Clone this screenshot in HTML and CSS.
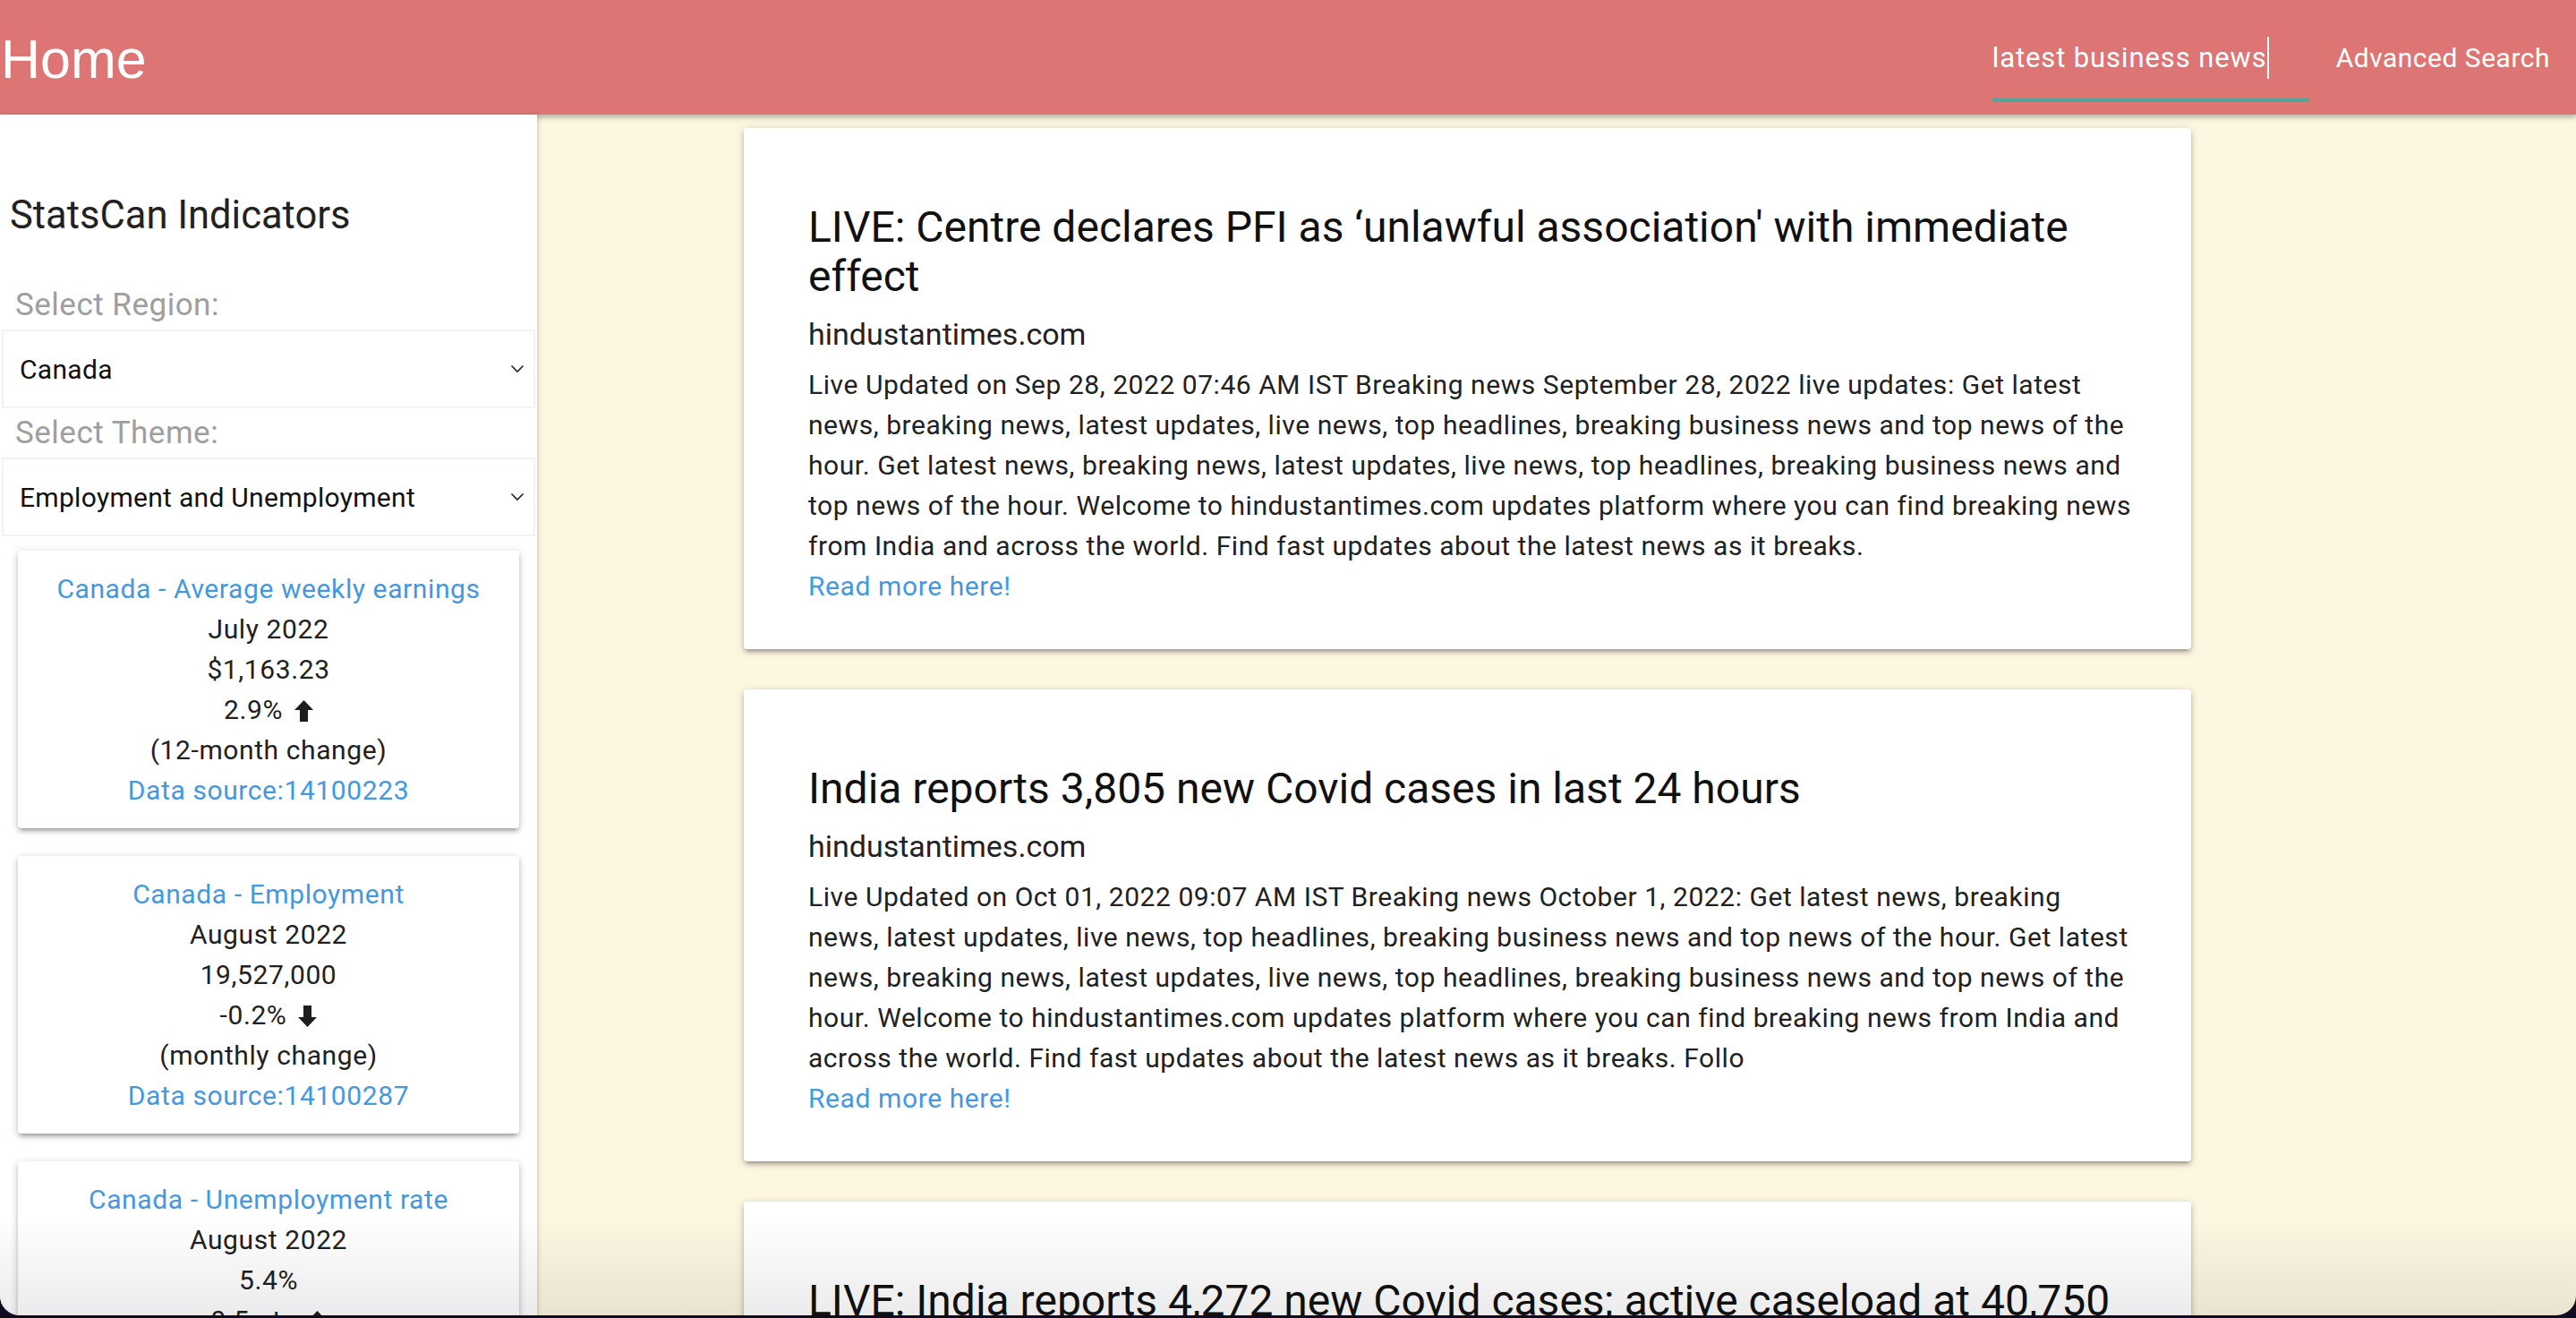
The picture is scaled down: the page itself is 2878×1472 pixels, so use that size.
FILE: index.html
```html
<!DOCTYPE html>
<html lang="en">
<head>
<meta charset="utf-8">
<title>Home</title>
<link rel="stylesheet" href="styles.css">
</head>
<body>
<div class="window">
  <header class="nav">
    <div class="brand">Home</div>
    <div class="search"><span class="search-text">latest business news</span><span class="caret"></span></div>
    <a class="nav-link" href="#">Advanced Search</a>
  </header>
  <div class="layout">
    <aside class="sidebar">
      <h5 class="side-title">StatsCan Indicators</h5>
      <div class="label">Select Region:</div>
      <div class="select"><span>Canada</span><svg class="chev" width="16" height="10" viewBox="0 0 16 10"><path d="M1.5 1.5 L8 8 L14.5 1.5" fill="none" stroke="#222" stroke-width="1.6"/></svg></div>
      <div class="label">Select Theme:</div>
      <div class="select"><span>Employment and Unemployment</span><svg class="chev" width="16" height="10" viewBox="0 0 16 10"><path d="M1.5 1.5 L8 8 L14.5 1.5" fill="none" stroke="#222" stroke-width="1.6"/></svg></div>
      <div class="stat-list">
        <div class="stat-card">
          <a class="link" href="#">Canada - Average weekly earnings</a>
          <div>July 2022</div>
          <div>$1,163.23</div>
          <div>2.9% <svg class="arrow" width="21" height="24" viewBox="0 0 21 24"><path d="M10.5 0 L21 11 H15 V24 H6 V11 H0 Z" fill="#1e1e1e"/></svg></div>
          <div>(12-month change)</div>
          <a class="link" href="#">Data source:14100223</a>
        </div>
        <div class="stat-card">
          <a class="link" href="#">Canada - Employment</a>
          <div>August 2022</div>
          <div>19,527,000</div>
          <div>-0.2% <svg class="arrow" width="21" height="24" viewBox="0 0 21 24"><path d="M10.5 24 L21 13 H15 V0 H6 V13 H0 Z" fill="#1e1e1e"/></svg></div>
          <div>(monthly change)</div>
          <a class="link" href="#">Data source:14100287</a>
        </div>
        <div class="stat-card">
          <a class="link" href="#">Canada - Unemployment rate</a>
          <div>August 2022</div>
          <div>5.4%</div>
          <div>0.5 pts <svg class="arrow" width="21" height="24" viewBox="0 0 21 24"><path d="M10.5 0 L21 11 H15 V24 H6 V11 H0 Z" fill="#1e1e1e"/></svg></div>
          <div>(monthly change)</div>
          <a class="link" href="#">Data source:14100287</a>
        </div>
      </div>
    </aside>
    <main class="main">
      <article class="news-card">
        <h5 class="news-title">LIVE: Centre declares PFI as ‘unlawful association' with immediate effect</h5>
        <h6 class="news-source">hindustantimes.com</h6>
        <p class="news-body">Live Updated on Sep 28, 2022 07:46 AM IST Breaking news September 28, 2022 live updates: Get latest<br>news, breaking news, latest updates, live news, top headlines, breaking business news and top news of the<br>hour. Get latest news, breaking news, latest updates, live news, top headlines, breaking business news and<br>top news of the hour. Welcome to hindustantimes.com updates platform where you can find breaking news<br>from India and across the world. Find fast updates about the latest news as it breaks.</p>
        <a class="link" href="#">Read more here!</a>
      </article>
      <article class="news-card">
        <h5 class="news-title">India reports 3,805 new Covid cases in last 24 hours</h5>
        <h6 class="news-source">hindustantimes.com</h6>
        <p class="news-body">Live Updated on Oct 01, 2022 09:07 AM IST Breaking news October 1, 2022: Get latest news, breaking<br>news, latest updates, live news, top headlines, breaking business news and top news of the hour. Get latest<br>news, breaking news, latest updates, live news, top headlines, breaking business news and top news of the<br>hour. Welcome to hindustantimes.com updates platform where you can find breaking news from India and<br>across the world. Find fast updates about the latest news as it breaks. Follo</p>
        <a class="link" href="#">Read more here!</a>
      </article>
      <article class="news-card">
        <h5 class="news-title">LIVE: India reports 4,272 new Covid cases; active caseload at 40,750</h5>
        <h6 class="news-source">hindustantimes.com</h6>
        <p class="news-body">Live Updated on Oct 02, 2022 08:10 AM IST Breaking news October 2, 2022: Get latest news, breaking<br>news, latest updates, live news, top headlines, breaking business news and top news of the hour.</p>
        <a class="link" href="#">Read more here!</a>
      </article>
    </main>
  </div>
  <div class="bottom-shade"></div>
</div>
</body>
</html>
```

FILE: styles.css
```css
html, body {
  margin: 0;
  padding: 0;
}
body {
  background: #0f0c22;
  font-family: Roboto, "Noto Sans", sans-serif;
  color: #212121;
  overflow: hidden;
}
.window {
  position: relative;
  height: 1469px;
  overflow: hidden;
  border-radius: 0 0 22px 22px;
  background: #fdf6e1;
  display: flex;
  flex-direction: column;
}
.nav {
  position: relative;
  z-index: 1;
  flex: 0 0 128px;
  height: 128px;
  background: #de7575;
  display: flex;
  align-items: flex-start;
  box-shadow: 0 4px 4px rgba(0,0,0,0.16), 0 2px 10px rgba(0,0,0,0.12);
  color: #fff;
}
.brand {
  flex: 1;
  font-family: "Liberation Sans", Arial, sans-serif;
  font-size: 61px;
  line-height: 72px;
  margin-top: 30px;
  padding-left: 1px;
}
.search {
  width: 354px;
  margin-top: 41px;
  padding-bottom: 22px;
  border-bottom: 4px solid #4fa698;
  font-size: 31px;
  letter-spacing: 0.9px;
  line-height: 45px;
  display: flex;
  align-items: center;
}
.caret {
  display: inline-block;
  width: 2px;
  height: 47px;
  background: #fff;
  margin-left: 0;
}
.nav-link {
  color: #fff;
  text-decoration: none;
  font-size: 30px;
  letter-spacing: 0.5px;
  line-height: 45px;
  margin-top: 42px;
  padding: 0 29px 0 30px;
}
.layout {
  flex: 1;
  display: flex;
  min-height: 0;
}
.sidebar {
  position: relative;
  z-index: 2;
  width: 600px;
  flex: 0 0 600px;
  background: #fff;
  box-shadow: 2px 0 4px rgba(0,0,0,0.14);
}
.side-title {
  font-size: 43.5px;
  line-height: 54px;
  font-weight: 400;
  margin: 86px 0 50px 11px;
  color: #222;
}
.label {
  font-size: 35px;
  letter-spacing: 0.5px;
  line-height: 45px;
  color: #9e9e9e;
  margin: 5px 0 5px 17px;
}
.select {
  height: 88px;
  box-sizing: border-box;
  margin: 0 2px;
  border: 2px solid #f2f2f2;
  display: flex;
  align-items: center;
  justify-content: space-between;
  padding: 0 10px 0 18px;
  font-size: 30px;
  letter-spacing: 0.3px;
  color: #111;
}
.chev {
  display: block;
}
.stat-list {
  margin-top: 16px;
  display: flex;
  flex-direction: column;
  gap: 31px;
}
.stat-card {
  margin: 0 20px;
  background: #fff;
  border-radius: 4px;
  padding: 20px;
  text-align: center;
  font-size: 30px;
  letter-spacing: 0.6px;
  line-height: 45px;
  box-shadow: 0 4px 4px 0 rgba(0,0,0,0.14), 0 6px 2px -4px rgba(0,0,0,0.12), 0 2px 10px 0 rgba(0,0,0,0.2);
}
.stat-card .link {
  display: block;
}
.link {
  color: #4398e0;
  text-decoration: none;
}
.arrow {
  vertical-align: -3px;
  margin-left: 5px;
}
.main {
  flex: 1;
  display: flex;
  flex-direction: column;
  gap: 45px;
  padding-top: 15px;
  padding-left: 231px;
  min-width: 0;
}
.news-card {
  width: 1617px;
  box-sizing: border-box;
  background: #fff;
  border-radius: 4px;
  padding: 48px 72px 48px 72px;
  flex: 0 0 auto;
  box-shadow: 0 4px 4px 0 rgba(0,0,0,0.14), 0 6px 2px -4px rgba(0,0,0,0.12), 0 2px 10px 0 rgba(0,0,0,0.2);
}
.news-title {
  font-size: 48px;
  line-height: 55px;
  font-weight: 400;
  margin: 35px 0 15px;
  color: #111;
}
.news-source {
  font-size: 34px;
  line-height: 45px;
  font-weight: 400;
  margin: 0 0 11px;
  color: #222;
}
.news-body {
  font-size: 30px;
  letter-spacing: 0.55px;
  line-height: 45px;
  white-space: nowrap;
  margin: 0;
  color: #212121;
}
.news-card .link {
  display: block;
  font-size: 30px;
  letter-spacing: 0.6px;
  line-height: 45px;
}
.bottom-shade {
  position: absolute;
  left: 0;
  right: 0;
  bottom: 0;
  height: 110px;
  z-index: 5;
  pointer-events: none;
  background: linear-gradient(to bottom, rgba(0,0,0,0), rgba(0,0,0,0.08));
}
```
